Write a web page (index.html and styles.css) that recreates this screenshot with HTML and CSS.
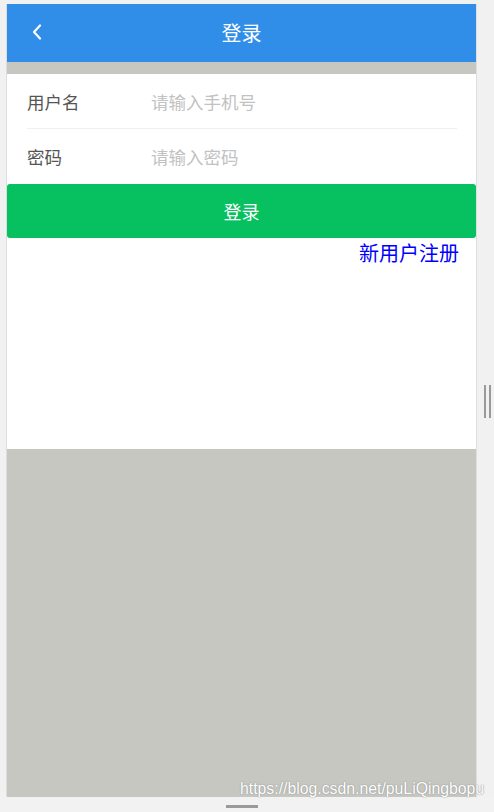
FILE: index.html
```html
<!DOCTYPE html>
<html lang="zh-CN">
<head>
<meta charset="utf-8">
<title>登录</title>
<link rel="stylesheet" href="styles.css">
</head>
<body>
<div class="device">
  <div class="screen">
    <header class="navbar">
      <span class="back">
        <svg width="10" height="16" viewBox="0 0 10 16"><path d="M8 1.5 L2 8 L8 14.5" fill="none" stroke="#fff" stroke-width="2.2" stroke-linecap="round" stroke-linejoin="round"/></svg>
      </span>
      <h1 class="title">登录</h1>
    </header>
    <div class="strip"></div>
    <main class="content">
      <form class="form">
        <div class="row first">
          <label class="label">用户名</label>
          <span class="input">请输入手机号</span>
        </div>
        <div class="row">
          <label class="label">密码</label>
          <span class="input">请输入密码</span>
        </div>
      </form>
      <div class="btn">登录</div>
      <div class="links"><a class="register">新用户注册</a></div>
    </main>
    <div class="filler"></div>
  </div>
  <div class="below"><span class="handle"></span></div>
</div>
<div class="vhandle"><span></span><span></span></div>
<div class="watermark">https://blog.csdn.net/puLiQingbopu</div>
</body>
</html>
```
FILE: styles.css
```css
html, body {
  margin: 0;
  padding: 0;
  background: #f1f1f1;
  font-family: "Noto Sans CJK SC", "Microsoft YaHei", sans-serif;
  width: 494px;
  height: 812px;
  overflow: hidden;
}
.device {
  margin: 4px 0 0 7px;
  width: 469px;
  display: flex;
  flex-direction: column;
  box-shadow: -1px 0 0 #dddddd, 1px 0 0 #dedede;
}
.screen {
  height: 793px;
  display: flex;
  flex-direction: column;
  background: #c7c7c2;
}
.navbar {
  height: 58px;
  background: #308ee8;
  display: flex;
  align-items: center;
  justify-content: center;
  position: relative;
}
.back {
  position: absolute;
  left: 25px;
  top: 20px;
  width: 10px;
  height: 16px;
  display: flex;
}
.title {
  margin: 0;
  font-size: 20px;
  font-weight: normal;
  color: #fff;
  line-height: 58px;
}
.strip {
  height: 12px;
  background: #c7c7c2;
}
.content {
  height: 375px;
  background: #fff;
  display: flex;
  flex-direction: column;
}
.form {
  margin: 0;
  padding: 0 19px 0 20px;
}
.row {
  display: flex;
  align-items: center;
  height: 54px;
  font-size: 17.5px;
}
.row.first {
  border-bottom: 1px solid #f0f0f0;
}
.row + .row {
  height: 55px;
}
.label {
  width: 124px;
  color: #555;
}
.input {
  color: #c2c2c2;
}
.btn {
  height: 54px;
  background: #07c160;
  border-radius: 3px;
  color: #fff;
  font-size: 18px;
  display: flex;
  align-items: center;
  justify-content: center;
}
.links {
  display: flex;
  justify-content: flex-end;
  padding: 0 17px 0 0;
}
.register {
  color: #0000ff;
  font-size: 20px;
  line-height: 29px;
}
.filler {
  flex: 1;
}
.below {
  height: 15px;
  display: flex;
  justify-content: center;
  align-items: flex-end;
  background: #f2f2f2;
  margin-left: -7px;
  width: 494px;
}
.handle {
  display: block;
  width: 32px;
  height: 3px;
  background: #9a9a9a;
  margin: 0 0 4px -10px;
}
.vhandle {
  position: absolute;
  left: 484px;
  top: 385px;
  display: flex;
  gap: 3px;
}
.vhandle span {
  display: block;
  width: 2px;
  height: 33px;
  background: #999;
}
.watermark {
  position: absolute;
  left: 240px;
  top: 780px;
  font-family: "Liberation Sans", Arial, sans-serif;
  font-size: 15.8px;
  color: #fff;
  text-shadow: 0 0 1px #888, 0 0 2px #aaa;
}
```
